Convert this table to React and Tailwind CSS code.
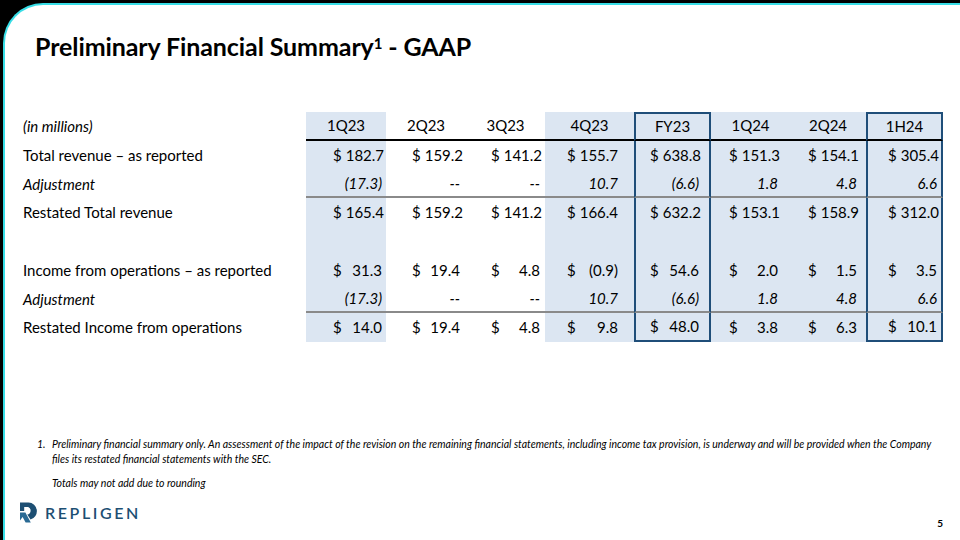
import React from 'react';

const cols = ['1Q23', '2Q23', '3Q23', '4Q23', 'FY23', '1Q24', '2Q24', '1H24'];

// per column: background, boxed, left pad for $, right pad for number
const colStyle = [
  { bg: 'bg-[#dce6f2]', box: false, pl: 'pl-[27px]', pr: 'pr-[4px]' },
  { bg: 'bg-white', box: false, pl: 'pl-[26px]', pr: 'pr-[6px]' },
  { bg: 'bg-white', box: false, pl: 'pl-[25px]', pr: 'pr-[5px]' },
  { bg: 'bg-[#dce6f2]', box: false, pl: 'pl-[22px]', pr: 'pr-[16px]' },
  { bg: 'bg-[#dce6f2]', box: true, pl: 'pl-[14px]', pr: 'pr-[10px]' },
  { bg: 'bg-[#dce6f2]', box: false, pl: 'pl-[18px]', pr: 'pr-[12px]' },
  { bg: 'bg-[#dce6f2]', box: false, pl: 'pl-[18px]', pr: 'pr-[9px]' },
  { bg: 'bg-[#dce6f2]', box: true, pl: 'pl-[20px]', pr: 'pr-[4px]' },
];

const rows = [
  { label: 'Total revenue – as reported', dollar: true, vals: ['182.7', '159.2', '141.2', '155.7', '638.8', '151.3', '154.1', '305.4'] },
  { label: 'Adjustment', italic: true, line: true, vals: ['(17.3)', '--', '--', '10.7', '(6.6)', '1.8', '4.8', '6.6'] },
  { label: 'Restated Total revenue', dollar: true, vals: ['165.4', '159.2', '141.2', '166.4', '632.2', '153.1', '158.9', '312.0'] },
  { label: '', vals: ['', '', '', '', '', '', '', ''] },
  { label: 'Income from operations – as reported', dollar: true, vals: ['31.3', '19.4', '4.8', '(0.9)', '54.6', '2.0', '1.5', '3.5'] },
  { label: 'Adjustment', italic: true, line: true, vals: ['(17.3)', '--', '--', '10.7', '(6.6)', '1.8', '4.8', '6.6'] },
  { label: 'Restated Income from operations', dollar: true, last: true, vals: ['14.0', '19.4', '4.8', '9.8', '48.0', '3.8', '6.3', '10.1'] },
];

function RepligenMark() {
  return (
    <svg width="21" height="23" viewBox="0 0 21 23">
      <path d="M2 1.5 H10.5 A8.6 8.6 0 0 1 12.5 18.4 L9.3 13.6 A4 4 0 0 0 10.2 6 H6.2 V10 H2 Z" fill="#1d4f73" />
      <path d="M2 11.6 H7.4 L12.8 21.5 H7.6 L4.6 16 L2 19.4 Z" fill="#2a6a94" />
    </svg>
  );
}

function Cell({ col, row, children }) {
  const s = colStyle[col];
  const box = s.box ? 'border-x-2 border-x-[#1f4e79]' : '';
  const bottom = row.line ? 'border-b-2 border-b-[#8a8a8a]' : '';
  const last = row.last && s.box ? 'border-b-2 border-b-[#1f4e79]' : '';
  return (
    <div className={`h-[28.7px] flex items-center justify-between gap-[4px] ${s.bg} ${box} ${bottom} ${last} ${s.pl} ${s.pr}`}>
      {children}
    </div>
  );
}

export default function App() {
  return (
    <div className="w-[960px] h-[540px] bg-black pt-[3px] pl-[3px] flex" style={{ fontFamily: 'Lato, "Open Sans", sans-serif' }}>
      <div className="flex-1 bg-white border-t-2 border-l-2 border-[#37dde6] rounded-tl-[40px] flex flex-col pt-[26px] text-black">
        <h1 className="pl-[30px] text-[25px] leading-[30px] font-bold tracking-[-0.1px]">
          Preliminary Financial Summary<sup className="text-[15px]">1</sup> - GAAP
        </h1>

        <div className="ml-[17px] mt-[51px] grid grid-cols-[284px_80px_80px_79px_89px_77px_79px_76px_77px] text-[15px]">
          <div className="h-[29px] flex items-center pl-[1px] italic">(in millions)</div>
          {cols.map((c, i) => (
            <div
              key={c}
              className={`h-[29px] flex items-center justify-center border-b-2 border-b-black ${colStyle[i].bg} ${colStyle[i].box ? 'border-x-2 border-t-2 border-x-[#1f4e79] border-t-[#1f4e79]' : ''}`}
            >
              {c}
            </div>
          ))}
          {rows.map((r, ri) => (
            <React.Fragment key={ri}>
              <div className={`h-[28.7px] flex items-center pl-[1px] ${r.italic ? 'italic' : ''}`}>{r.label}</div>
              {r.vals.map((v, ci) => (
                <Cell key={ci} col={ci} row={r}>
                  <span>{r.dollar ? '$' : ''}</span>
                  <span className={r.italic ? 'italic' : ''}>{v}</span>
                </Cell>
              ))}
            </React.Fragment>
          ))}
        </div>

        <div className="mt-[95px] pl-[32px] text-[10.5px] leading-[15px] italic flex">
          <span className="w-[15px] shrink-0">1.</span>
          <div className="w-[890px]">
            <p>
              Preliminary financial summary only. An assessment of the impact of the revision on the remaining financial statements, including income tax provision, is underway and will be provided when the Company files its restated financial statements with the SEC.
            </p>
            <p className="mt-[9px]">Totals may not add due to rounding</p>
          </div>
        </div>

        <div className="mt-[10px] pl-[13px] pr-[17px] flex items-end justify-between">
          <div className="flex items-center gap-[6px]">
            <RepligenMark />
            <span className="text-[16px] font-semibold tracking-[2.6px] text-[#1d4f73]">REPLIGEN</span>
          </div>
          <span className="text-[10px] font-bold mb-[-6px]">5</span>
        </div>
      </div>
    </div>
  );
}
